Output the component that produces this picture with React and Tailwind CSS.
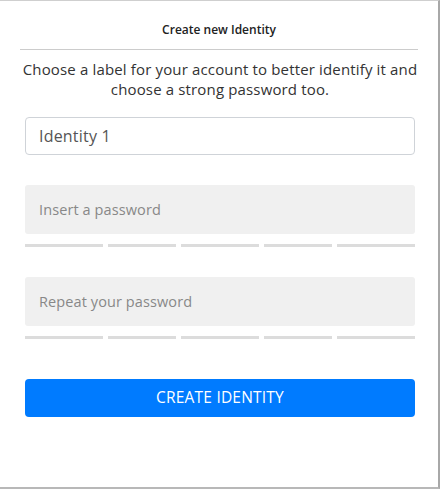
import React from "react";

const StrengthBars = () => (
    <div className="flex gap-[5px] mt-[10px]">
        <div className="h-[3px] w-[78px] bg-[#dcdcdc]" />
        <div className="h-[3px] w-[68px] bg-[#dcdcdc]" />
        <div className="h-[3px] w-[78px] bg-[#dcdcdc]" />
        <div className="h-[3px] w-[68px] bg-[#dcdcdc]" />
        <div className="h-[3px] flex-1 bg-[#dcdcdc]" />
    </div>
);

const PasswordField = ({ placeholder }) => (
    <div>
        <input
            type="password"
            placeholder={placeholder}
            className="block w-full h-[49px] rounded-[3px] bg-[#f0f0f0] px-[14px] text-[14.5px] tracking-[0.1px] text-[#555] placeholder:text-[#888] outline-none"
        />
        <StrengthBars />
    </div>
);

export default function App() {
    return (
        <div className="w-[441px] h-[490px] bg-white font-['Open_Sans',sans-serif]">
            <div className="w-[440px] h-[489px] border-t border-[#cfcfcf] border-r-2 border-r-[#a8a8a8] border-b-2 border-b-[#b8b8b8] bg-white">
                {/* Header */}
                <div className="mx-[20px] h-[49px] border-b border-[#cccccc] flex items-center justify-center">
                    <h3 className="text-[12px] font-semibold text-[#222] pt-[10px]">Create new Identity</h3>
                </div>

                <div className="w-[390px] ml-[25px]">
                    <p className="text-center text-[15px] leading-[20px] tracking-[0.15px] text-[#333] mt-[9px] -mx-[6px]">
                        Choose a label for your account to better identify it and choose a strong password too.
                    </p>

                    <input
                        type="text"
                        defaultValue="Identity 1"
                        className="block mt-[18px] w-full h-[38px] rounded-[4px] border border-[#cfd3d8] px-[13px] text-[16px] tracking-[0.2px] text-[#555] outline-none"
                    />

                    <div className="mt-[30px]">
                        <PasswordField placeholder="Insert a password" />
                    </div>
                    <div className="mt-[30px]">
                        <PasswordField placeholder="Repeat your password" />
                    </div>

                    <button
                        type="button"
                        className="block mt-[40px] w-full h-[38px] rounded-[4px] bg-[#007bff] text-white text-[15.5px] tracking-[0.2px]"
                    >
                        CREATE IDENTITY
                    </button>
                </div>
            </div>
        </div>
    );
}
